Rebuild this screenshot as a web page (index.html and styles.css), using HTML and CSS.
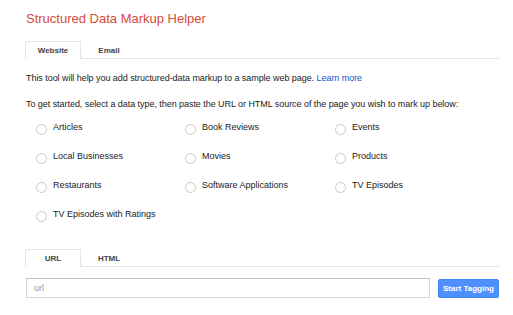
FILE: index.html
```html
<!DOCTYPE html>
<html lang="en">
<head>
  <meta charset="UTF-8" />
  <title>Structured Data Markup Helper</title>
  <link rel="stylesheet" href="styles.css">
</head>
<body>
  <h1 class="title">Structured Data Markup Helper</h1>

  <div class="tabs">
    <div class="tab active">Website</div>
    <div class="tab">Email</div>
  </div>

  <p class="intro">This tool will help you add structured-data markup to a sample web page. <a href="#">Learn more</a></p>
  <p class="intro">To get started, select a data type, then paste the URL or HTML source of the page you wish to mark up below:</p>

  <div class="types">
    <label class="type"><span class="radio"></span>Articles</label>
    <label class="type"><span class="radio"></span>Book Reviews</label>
    <label class="type"><span class="radio"></span>Events</label>
    <label class="type"><span class="radio"></span>Local Businesses</label>
    <label class="type"><span class="radio"></span>Movies</label>
    <label class="type"><span class="radio"></span>Products</label>
    <label class="type"><span class="radio"></span>Restaurants</label>
    <label class="type"><span class="radio"></span>Software Applications</label>
    <label class="type"><span class="radio"></span>TV Episodes</label>
    <label class="type"><span class="radio"></span>TV Episodes with Ratings</label>
  </div>

  <div class="tabs source-tabs">
    <div class="tab active">URL</div>
    <div class="tab">HTML</div>
  </div>

  <div class="source">
    <input class="url" type="text" placeholder="url">
    <button class="button">Start Tagging</button>
  </div>
</body>
</html>
```

FILE: styles.css
```css
body {
  margin: 0;
  padding: 0 14px 0 26px;
  background: #fff;
  font-family: 'Liberation Sans', Arial, sans-serif;
  font-size: 9px;
  color: #222;
}

.title {
  margin: 11px 0 0;
  font-size: 13px;
  line-height: 16px;
  font-weight: normal;
  color: #d64b3a;
}

.tabs {
  display: flex;
  margin-top: 14px;
  border-bottom: 1px solid #e5e5e5;
}

.tab {
  width: 54px;
  height: 16px;
  line-height: 17px;
  text-align: center;
  font-size: 8px;
  font-weight: bold;
  color: #444;
  border: 1px solid transparent;
  border-bottom: none;
  margin-bottom: -1px;
  box-sizing: content-box;
}

.tab.active {
  background: #fff;
  border-color: #e5e5e5;
  height: 17px;
  margin-left: -1px;
}

.intro {
  margin: 13px 0 0;
  line-height: 13px;
  letter-spacing: -0.05px;
}

.intro + .intro {
  margin-top: 13px;
}

a {
  color: #15c;
  text-decoration: none;
}

.types {
  display: grid;
  grid-template-columns: 149px 150px 150px;
  row-gap: 17px;
  margin: 10px 0 0 10px;
}

.type {
  display: flex;
  align-items: center;
  height: 12px;
  line-height: 12px;
}

.radio {
  width: 9px;
  height: 9px;
  margin: 5px 6px 0 0;
  border: 1px solid #c8c8c8;
  border-radius: 50%;
  background: #fff;
}

.source-tabs {
  margin-top: 29px;
}

.source {
  display: flex;
  gap: 8px;
  margin-top: 11px;
}

.url {
  width: 404px;
  height: 20px;
  margin: 0;
  padding: 0 7px;
  box-sizing: border-box;
  border: 1px solid #d9d9d9;
  border-top-color: #c0c0c0;
  font-family: 'Liberation Sans', Arial, sans-serif;
  font-size: 9px;
  color: #222;
}

.url::placeholder {
  color: #999;
}

.button {
  width: 61px;
  height: 19px;
  margin-top: 1px;
  padding: 0;
  background: #4d90fe;
  border: 1px solid #3f87f5;
  border-radius: 2px;
  color: #fff;
  font-family: 'Liberation Sans', Arial, sans-serif;
  font-size: 8px;
  font-weight: bold;
}
```
